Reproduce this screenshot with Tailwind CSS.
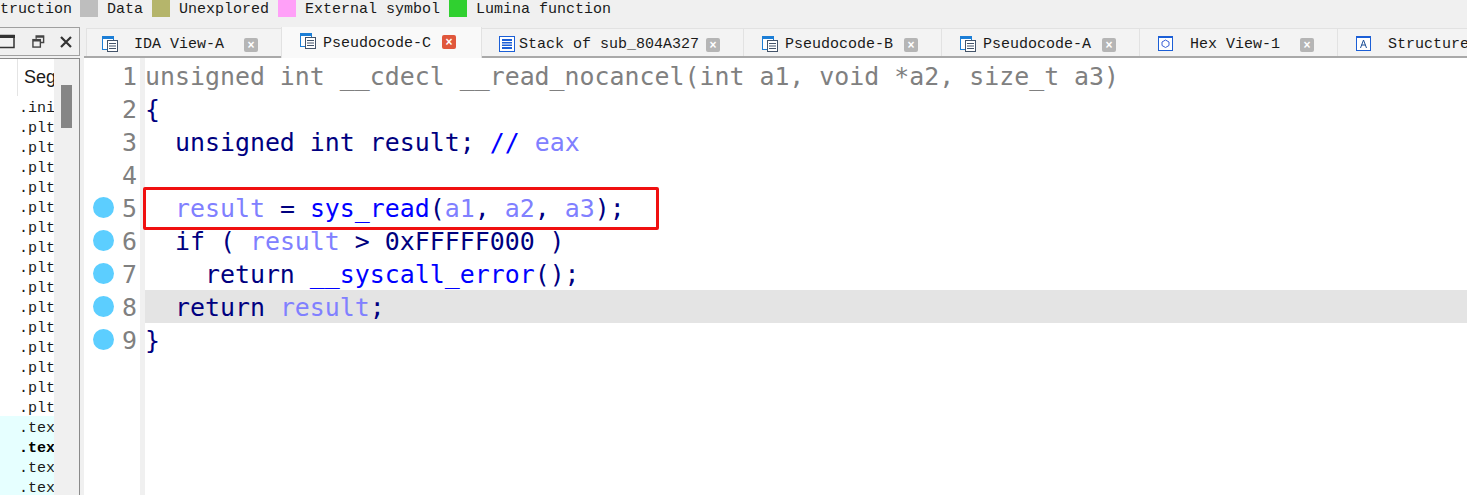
<!DOCTYPE html>
<html lang="en">
<head>
  <meta charset="UTF-8" />
  <title>IDA - Pseudocode-C</title>
  <script src="https://cdn.jsdelivr.net/npm/@tailwindcss/browser@4"></script>
</head>
<body class="bg-[#f0f0f0] h-[495px] w-[1467px] overflow-hidden flex flex-col font-['Liberation_Mono',monospace] text-[15px] text-[#1a1a1a]">

  <!-- Legend -->
  <div class="h-[27px] shrink-0 flex items-start whitespace-nowrap -ml-[27px] leading-[19px]">
    <span>Instruction</span>
    <span class="w-[18px] h-[17px] bg-[#bebebe] ml-[8px]"></span>
    <span class="ml-[9px]">Data</span>
    <span class="w-[18px] h-[17px] bg-[#b5b56b] ml-[9px]"></span>
    <span class="ml-[9px]">Unexplored</span>
    <span class="w-[18px] h-[17px] bg-[#ffa0f8] ml-[9px]"></span>
    <span class="ml-[9px]">External symbol</span>
    <span class="w-[18px] h-[17px] bg-[#30d030] ml-[9px]"></span>
    <span class="ml-[9px]">Lumina function</span>
  </div>

  <div class="flex flex-1 min-h-0">
    <!-- Left panel -->
    <div class="w-[80px] shrink-0 flex flex-col">
      <div class="h-[29px] shrink-0 flex items-center border-t border-r border-b border-[#a0a0a0] overflow-hidden">
        <svg width="15" height="15" viewBox="0 0 15 15" class="shrink-0"><path d="M0 1.500h14v12H0" fill="none" stroke="#333" stroke-width="1.500"/><rect x="0" y="1" width="15" height="3" fill="#333"/></svg>
        <svg width="13" height="13" viewBox="0 0 14 14" class="shrink-0 ml-[17px]"><path d="M4.500 4V1h8v7h-3" fill="none" stroke="#444" stroke-width="1.500"/><rect x="1" y="5" width="8" height="8" fill="none" stroke="#444" stroke-width="1.500"/><path d="M1 6h8M5 2h8" stroke="#444" stroke-width="2"/></svg>
        <svg width="12" height="12" viewBox="0 0 12 12" class="shrink-0 ml-[15px]"><path d="M1 1l10 10M11 1L1 11" stroke="#333" stroke-width="2.200"/></svg>
      </div>
      <div class="h-[2px] shrink-0"></div>
      <div class="flex flex-1 min-h-0 overflow-hidden border-t border-r border-[#8a8a8a]">
        <div class="w-[54px] shrink-0 bg-white flex flex-col overflow-hidden">
          <div class="h-[37px] shrink-0 pl-[6px] pt-[4px] ml-[17px] border-l border-[#e4e4e4] text-[18px] leading-[28px] font-['Liberation_Sans',sans-serif]">Seg</div>
          <div class="leading-[26px] pl-[19px] [&>div]:h-[20px]">
            <div>.ini</div>
            <div>.plt</div><div>.plt</div><div>.plt</div><div>.plt</div><div>.plt</div>
            <div>.plt</div><div>.plt</div><div>.plt</div><div>.plt</div><div>.plt</div>
            <div>.plt</div><div>.plt</div><div>.plt</div><div>.plt</div><div>.plt</div>
          </div>
          <div class="leading-[26px] pl-[19px] bg-[#e6ffff] flex-1 [&>div]:h-[20px]">
            <div>.tex</div>
            <div class="font-bold text-black">.tex</div>
            <div>.tex</div>
            <div>.tex</div>
          </div>
        </div>
        <div class="flex-1 relative">
          <div class="absolute left-[7px] top-[26px] w-[11px] h-[43px] bg-[#868686]"></div>
        </div>
      </div>
    </div>

    <!-- Right: tabs and editor -->
    <div class="flex-1 min-w-0 flex flex-col ml-[4px]">
      <div class="h-[31px] shrink-0 flex items-end pl-[2px] border-b-2 border-[#a9a9a9] whitespace-nowrap">
        <div class="w-[195px] h-[28px] shrink-0 flex items-center pt-[2px] border-l border-t border-[#e2e2e2] bg-[#f3f3f3]">
          <svg width="16" height="16" viewBox="0 0 16 16" class="ml-[15px]"><rect x=".5" y=".5" width="11" height="13" fill="#fff" stroke="#1c7ed6"/><rect x="0" y="0" width="12" height="3" fill="#1c7ed6"/><rect x="5.500" y="4.500" width="10" height="11" fill="#fff" stroke="#44546a"/><path d="M7 7.500h7M7 10h7M7 12.500h7" stroke="#44546a"/></svg>
          <span class="ml-[16px] mt-[4px]">IDA View-A</span>
          <span class="ml-[20px] mt-[2px] w-[14px] h-[14px] rounded-[2px] bg-[#b5b5b5] text-white text-[12px] leading-[14px] text-center font-bold font-['Liberation_Sans',sans-serif]">×</span>
        </div>
        <div class="w-[201px] h-[31px] shrink-0 flex items-center border-l border-r border-[#e2e2e2] bg-[#f9f9f9] -mb-[2px] pb-[3px]">
          <svg width="16" height="16" viewBox="0 0 16 16" class="ml-[18px]"><rect x=".5" y=".5" width="11" height="13" fill="#fff" stroke="#1c7ed6"/><rect x="0" y="0" width="12" height="3" fill="#1c7ed6"/><rect x="5.500" y="4.500" width="10" height="11" fill="#fff" stroke="#44546a"/><path d="M7 7.500h7M7 10h7M7 12.500h7" stroke="#44546a"/></svg>
          <span class="ml-[7px] mt-[6px]">Pseudocode-C</span>
          <span class="ml-[11px] mt-[2px] w-[14px] h-[14px] rounded-[2px] bg-[#e0573c] text-white text-[12px] leading-[14px] text-center font-bold font-['Liberation_Sans',sans-serif]">×</span>
        </div>
        <div class="w-[262px] h-[28px] shrink-0 flex items-center pt-[2px] border-t border-r border-[#e2e2e2] bg-[#f3f3f3]">
          <svg width="16" height="16" viewBox="0 0 16 16" class="ml-[17px]"><rect x=".5" y=".5" width="15" height="15" fill="#fff" stroke="#1c5fd6"/><rect x="3" y="3" width="10" height="10" fill="#1c5fd6"/><path d="M3 5.500h10M3 8h10M3 10.500h10" stroke="#fff"/></svg>
          <span class="ml-[4px] mt-[4px]">Stack of sub_804A327</span>
          <span class="ml-[7px] mt-[2px] w-[14px] h-[14px] rounded-[2px] bg-[#b5b5b5] text-white text-[12px] leading-[14px] text-center font-bold font-['Liberation_Sans',sans-serif]">×</span>
        </div>
        <div class="w-[198px] h-[28px] shrink-0 flex items-center pt-[2px] border-t border-r border-[#e2e2e2] bg-[#f3f3f3]">
          <svg width="16" height="16" viewBox="0 0 16 16" class="ml-[18px]"><rect x=".5" y=".5" width="11" height="13" fill="#fff" stroke="#1c7ed6"/><rect x="0" y="0" width="12" height="3" fill="#1c7ed6"/><rect x="5.500" y="4.500" width="10" height="11" fill="#fff" stroke="#44546a"/><path d="M7 7.500h7M7 10h7M7 12.500h7" stroke="#44546a"/></svg>
          <span class="ml-[7px] mt-[4px]">Pseudocode-B</span>
          <span class="ml-[11px] mt-[2px] w-[14px] h-[14px] rounded-[2px] bg-[#b5b5b5] text-white text-[12px] leading-[14px] text-center font-bold font-['Liberation_Sans',sans-serif]">×</span>
        </div>
        <div class="w-[198px] h-[28px] shrink-0 flex items-center pt-[2px] border-t border-r border-[#e2e2e2] bg-[#f3f3f3]">
          <svg width="16" height="16" viewBox="0 0 16 16" class="ml-[18px]"><rect x=".5" y=".5" width="11" height="13" fill="#fff" stroke="#1c7ed6"/><rect x="0" y="0" width="12" height="3" fill="#1c7ed6"/><rect x="5.500" y="4.500" width="10" height="11" fill="#fff" stroke="#44546a"/><path d="M7 7.500h7M7 10h7M7 12.500h7" stroke="#44546a"/></svg>
          <span class="ml-[7px] mt-[4px]">Pseudocode-A</span>
          <span class="ml-[11px] mt-[2px] w-[14px] h-[14px] rounded-[2px] bg-[#b5b5b5] text-white text-[12px] leading-[14px] text-center font-bold font-['Liberation_Sans',sans-serif]">×</span>
        </div>
        <div class="w-[198px] h-[28px] shrink-0 flex items-center pt-[2px] border-t border-r border-[#e2e2e2] bg-[#f3f3f3]">
          <svg width="15" height="15" viewBox="0 0 15 15" class="ml-[18px]"><rect x=".5" y=".5" width="14" height="14" fill="#fff" stroke="#1c5fd6"/><rect x="0" y="0" width="15" height="2" fill="#1c5fd6"/><path d="M7.500 4l3.500 2v3.500L7.500 11.500 4 9.500V6z" fill="none" stroke="#3a5fd6"/></svg>
          <span class="ml-[17px] mt-[4px]">Hex View-1</span>
          <span class="ml-[20px] mt-[2px] w-[14px] h-[14px] rounded-[2px] bg-[#b5b5b5] text-white text-[12px] leading-[14px] text-center font-bold font-['Liberation_Sans',sans-serif]">×</span>
        </div>
        <div class="h-[28px] min-w-0 flex-1 overflow-hidden flex items-center pt-[2px] border-t border-[#e2e2e2] bg-[#f3f3f3]">
          <svg width="15" height="15" viewBox="0 0 15 15" class="ml-[18px] shrink-0"><rect x=".5" y=".5" width="14" height="14" fill="#fff" stroke="#1c5fd6"/><rect x="0" y="0" width="15" height="2" fill="#1c5fd6"/><path d="M4.500 12L7.500 4l3 8M5.500 9h4" fill="none" stroke="#1c4f96"/></svg>
          <span class="ml-[17px] mt-[4px]">Structures</span>
        </div>
      </div>

      <!-- Code -->
      <div class="flex flex-1 min-h-0 bg-white font-['DejaVu_Sans_Mono',monospace] text-[24.900px] leading-[35px] text-[#00007f]">
        <div class="w-[56px] shrink-0 pt-[1px] pr-[3px] text-[#808080]">
          <div class="flex items-center justify-end h-[33px]"><span class="mt-[2px]">1</span></div>
          <div class="flex items-center justify-end h-[33px]"><span class="mt-[2px]">2</span></div>
          <div class="flex items-center justify-end h-[33px]"><span class="mt-[2px]">3</span></div>
          <div class="flex items-center justify-end h-[33px]"><span class="mt-[2px]">4</span></div>
          <div class="flex items-center justify-between h-[33px] pl-[9px]"><span class="w-[21px] h-[21px] rounded-full bg-[#5cceff]"></span><span class="mt-[2px]">5</span></div>
          <div class="flex items-center justify-between h-[33px] pl-[9px]"><span class="w-[21px] h-[21px] rounded-full bg-[#5cceff]"></span><span class="mt-[2px]">6</span></div>
          <div class="flex items-center justify-between h-[33px] pl-[9px]"><span class="w-[21px] h-[21px] rounded-full bg-[#5cceff]"></span><span class="mt-[2px]">7</span></div>
          <div class="flex items-center justify-between h-[33px] pl-[9px]"><span class="w-[21px] h-[21px] rounded-full bg-[#5cceff]"></span><span class="mt-[2px]">8</span></div>
          <div class="flex items-center justify-between h-[33px] pl-[9px]"><span class="w-[21px] h-[21px] rounded-full bg-[#5cceff]"></span><span class="mt-[2px]">9</span></div>
        </div>
        <div class="w-[5px] shrink-0 bg-[#f0f0f0]"></div>
        <div class="flex-1 min-w-0 pt-[1px] relative">
          <div class="h-[33px] whitespace-pre"><span class="text-[#808080]">unsigned int __cdecl __read_nocancel(int a1, void *a2, size_t a3)</span></div>
          <div class="h-[33px] whitespace-pre">{</div>
          <div class="h-[33px] whitespace-pre">  unsigned int result; <span class="text-[#0000ff]">//</span> <span class="text-[#8080ff]">eax</span></div>
          <div class="h-[33px] whitespace-pre"> </div>
          <div class="h-[33px] whitespace-pre">  <span class="text-[#8080ff]">result</span> = <span class="text-[#0000ff]">sys_read</span>(<span class="text-[#8080ff]">a1</span>, <span class="text-[#8080ff]">a2</span>, <span class="text-[#8080ff]">a3</span>);</div>
          <div class="h-[33px] whitespace-pre">  if ( <span class="text-[#8080ff]">result</span> &gt; 0xFFFFF000 )</div>
          <div class="h-[33px] whitespace-pre">    return <span class="text-[#0000ff]">__syscall_error</span>();</div>
          <div class="h-[33px] whitespace-pre bg-[#e4e4e4]">  return <span class="text-[#8080ff]">result</span>;</div>
          <div class="h-[33px] whitespace-pre">}</div>
          <!-- annotation box drawn over the code -->
          <div class="absolute left-[-2px] top-[129px] w-[516px] h-[43px] border-[3px] border-[#f01010] rounded-[2px]"></div>
        </div>
      </div>
    </div>
  </div>
</body>
</html>
